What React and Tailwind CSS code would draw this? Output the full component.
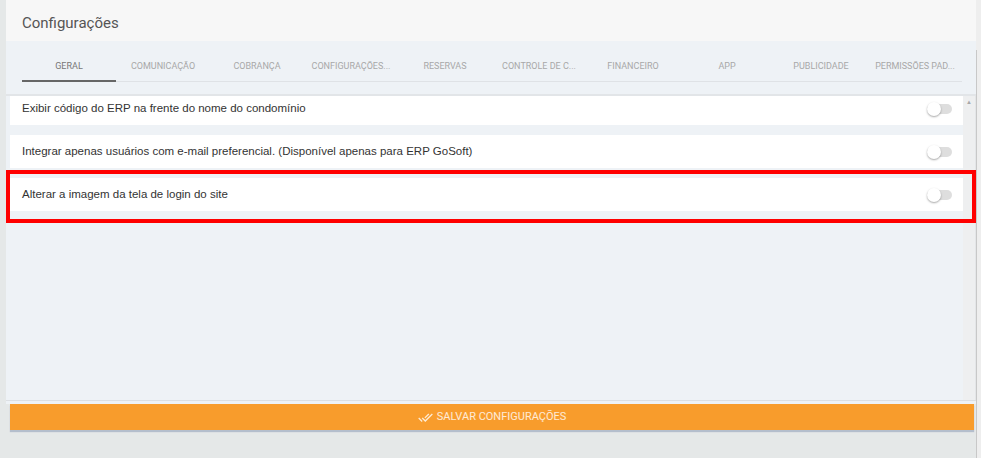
import { useState } from 'react'

const tabs = [
  'Geral',
  'Comunicação',
  'Cobrança',
  'Configurações...',
  'Reservas',
  'Controle de C...',
  'Financeiro',
  'App',
  'Publicidade',
  'Permissões Pad...',
]

const options = [
  { id: 'erp-code', label: 'Exibir código do ERP na frente do nome do condomínio' },
  { id: 'email-only', label: 'Integrar apenas usuários com e-mail preferencial. (Disponível apenas para ERP GoSoft)' },
  { id: 'login-image', label: 'Alterar a imagem da tela de login do site', highlight: true },
]

function Toggle({ checked, onChange }) {
  return (
    <button
      type="button"
      onClick={onChange}
      className="relative flex h-[16px] w-[25px] shrink-0 items-center"
    >
      <span className={`h-[10px] w-full rounded-full ${checked ? 'bg-[#f9c98a]' : 'bg-[#dedede]'}`} />
      <span
        className={`absolute top-px h-[14px] w-[14px] rounded-full shadow-[0_1px_2px_rgba(0,0,0,0.35)] ${
          checked ? 'left-[11px] bg-[#f89c2c]' : 'left-0 bg-white'
        }`}
      />
    </button>
  )
}

function DoneAllIcon() {
  return (
    <svg viewBox="0 0 24 24" className="h-[15px] w-[15px] fill-current">
      <path d="M18 7l-1.41-1.41-6.34 6.34 1.41 1.41L18 7zm4.24-1.41L11.66 16.17 7.48 12l-1.41 1.41L11.66 19l12-12-1.42-1.41zM.41 13.41L6 19l1.41-1.41L1.83 12 .41 13.41z" />
    </svg>
  )
}

export default function App() {
  const [activeTab, setActiveTab] = useState(0)
  const [values, setValues] = useState({})

  return (
    <div className="relative flex h-[458px] w-[981px] overflow-hidden bg-[#e5e8e8] pl-[6px] font-['Liberation_Sans',Arial,sans-serif]">
      <div className="flex w-[970px] flex-col">
        <div className="flex h-[41px] items-center bg-[#f7f7f7] pl-[16px] pt-[5px] font-['Roboto',sans-serif] text-[15px] text-[#555]">
          Configurações
        </div>

        <div className="h-[53px] bg-[#eef2f6] pl-[16px] pt-[19px]">
          <div className="grid w-[940px] grid-cols-10 border-b border-[#dfe2e6] font-['Roboto',sans-serif]">
            {tabs.map((tab, i) => (
              <button
                key={tab}
                type="button"
                onClick={() => setActiveTab(i)}
                className={`-mb-px whitespace-nowrap border-b-2 pb-[7px] text-center text-[9px] leading-[13px] uppercase ${
                  activeTab === i ? 'border-[#666] text-[#777]' : 'border-transparent text-[#a8a8a8]'
                }`}
              >
                {tab}
              </button>
            ))}
          </div>
        </div>

        <div className="h-[2px] bg-[#e2e5e8]" />

        <div className="flex h-[304px] overflow-hidden bg-[#eef2f6] pl-[4px]">
          <div className="-mt-[4px] flex flex-1 flex-col gap-[10px]">
            {options.map((opt) => (
              <div
                key={opt.id}
                className="flex h-[33px] shrink-0 items-center justify-between bg-white pl-[12px] pr-[11px] text-[11.5px] text-[#333]"
              >
                <span>{opt.label}</span>
                <Toggle
                  checked={!!values[opt.id]}
                  onChange={() => setValues((prev) => ({ ...prev, [opt.id]: !prev[opt.id] }))}
                />
              </div>
            ))}
          </div>
          <div className="flex w-[12px] justify-center bg-[#eeeff0] pt-[3px] text-[6px] leading-none text-[#a8a8a8]">
            ▲
          </div>
          <div className="w-px bg-[#e4e6e8]" />
        </div>

        <div className="h-px bg-[#dcdfe3]" />
        <div className="h-[3px] bg-[#eef2f6]" />

        <div className="pl-[4px] pr-[2px]">
          <button
            type="button"
            className="flex h-[26px] w-full items-center justify-center gap-[4px] bg-[#f89c2c] font-['Roboto',sans-serif] text-[11px] uppercase text-white/80 shadow-[0_2px_1px_rgba(120,140,170,0.45)]"
          >
            <DoneAllIcon />
            Salvar Configurações
          </button>
        </div>
      </div>

      <div className="ml-auto flex w-[5px] bg-[#eeeeee]">
        <div className="mt-[50px] w-px bg-[#c8c8c8]" />
      </div>

      <div className="pointer-events-none absolute left-[6px] top-[170px] h-[53px] w-[970px] border-4 border-[#ff0000]" />
    </div>
  )
}
